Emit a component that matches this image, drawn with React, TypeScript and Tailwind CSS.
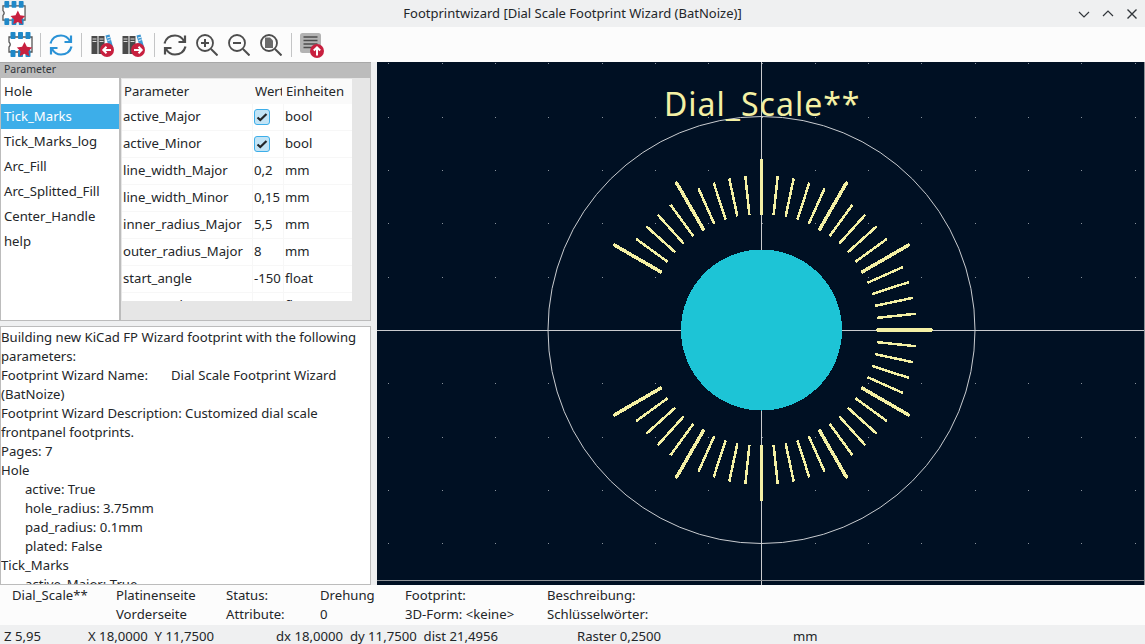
const font = { fontFamily: '"Noto Sans", sans-serif' }

const rows = [
  ['active_Major', 'check', 'bool'],
  ['active_Minor', 'check', 'bool'],
  ['line_width_Major', '0,2', 'mm'],
  ['line_width_Minor', '0,15', 'mm'],
  ['inner_radius_Major', '5,5', 'mm'],
  ['outer_radius_Major', '8', 'mm'],
  ['start_angle', '-150', 'float'],
  ['stop_angle', '150', 'float'],
]

const pages = ['Hole', 'Tick_Marks', 'Tick_Marks_log', 'Arc_Fill', 'Arc_Splitted_Fill', 'Center_Handle', 'help']

const log: [string, boolean][] = [
  ['Footprint Wizard Description: Customized dial scale frontpanel footprints.', false],
  ['Pages: 7', false],
  ['Hole', false],
  ['active: True', true],
  ['hole_radius: 3.75mm', true],
  ['pad_radius: 0.1mm', true],
  ['plated: False', true],
  ['Tick_Marks', false],
  ['active_Major: True', true],
]

function Sep() {
  return <div className="h-6 w-px bg-[#c4c5c6] shrink-0" />
}

function WizardIcon({ size = 25 }: { size?: number }) {
  const pads = [2.500, 10, 17.500]
  return (
    <svg width={size} height={size} viewBox="0 0 25 25" className="shrink-0">
      <path d="M1 5h23v15H1v-5q2.500-2.500 0-5z" fill="#fff" stroke="#555" strokeWidth="1.300" />
      {pads.map((x) => (
        <g key={x}>
          <rect x={x} y="0" width="5" height="7" rx="0.800" fill="#1f88c8" />
          <rect x={x} y="18" width="5" height="7" rx="0.800" fill="#1f88c8" />
        </g>
      ))}
      <path d="M16.500 10l2.400 4.800 5.300.8-3.800 3.600.9 5-4.800-2.400-4.800 2.400.9-5-3.800-3.600 5.300-.8z" fill="#c8203f" />
    </svg>
  )
}

function RefreshIcon({ color }: { color: string }) {
  return (
    <svg width="24" height="24" viewBox="0 0 24 24" fill="none" stroke={color} strokeWidth="2.200" className="shrink-0">
      <path d="M1.500 10.500C3 5 7 2.500 12 2.500c4 0 7 2 9 5.500" />
      <path d="M22 2.500V9h-6.500" />
      <path d="M22.500 13.500C21 19 17 21.500 12 21.500c-4 0-7-2-9-5.500" />
      <path d="M2 21.500V15h6.500" />
    </svg>
  )
}

function LibIcon({ dir }: { dir: 'left' | 'right' }) {
  return (
    <svg width="24" height="24" viewBox="0 0 24 24" className="shrink-0">
      <rect x="0.500" y="3" width="6" height="18" fill="#4a4a4a" />
      <rect x="7.500" y="3" width="6" height="18" fill="#4a4a4a" />
      <path d="M1.500 6h4M1.500 8.500h4M8.500 6h4M8.500 8.500h4" stroke="#ddd" strokeWidth="1" />
      <path d="M14.500 2.500l4-1 4 14-4 1z" fill="#3d97d3" />
      <path d="M16 5l3-.8M16.600 7.500l3-.8" stroke="#fff" strokeWidth="0.900" />
      <circle cx="16" cy="17" r="7" fill="#c8203f" />
      {dir === 'left' ? (
        <path d="M20 17h-7.500M15.500 13.800L12.300 17l3.200 3.200" fill="none" stroke="#fff" strokeWidth="2" />
      ) : (
        <path d="M12 17h7.500M16.500 13.800l3.200 3.200-3.200 3.200" fill="none" stroke="#fff" strokeWidth="2" />
      )}
    </svg>
  )
}

function ZoomIcon({ kind }: { kind: 'in' | 'out' | 'fit' }) {
  return (
    <svg width="22" height="22" viewBox="0 0 22 22" fill="none" stroke="#4d4d4d" strokeWidth="1.800" className="shrink-0">
      <circle cx="9" cy="9" r="8" />
      <path d="M15 15l6.500 6.500" strokeWidth="2" />
      {kind !== 'fit' && <path d="M5 9h8" strokeWidth="2" />}
      {kind === 'in' && <path d="M9 5v8" strokeWidth="2" />}
      {kind === 'fit' && <path d="M5 3.500h5l3 3V14H5z" fill="#6b6b6b" stroke="none" />}
    </svg>
  )
}

function MessageIcon() {
  return (
    <svg width="24" height="26" viewBox="0 0 24 26" className="shrink-0">
      <rect x="0" y="1" width="21" height="20" rx="2.500" fill="#b3b3b3" />
      <path d="M3.500 5h14M3.500 8.500h14M3.500 12h14M3.500 15.500h10" stroke="#4d4d4d" strokeWidth="1.400" />
      <circle cx="17" cy="19" r="7" fill="#c8203f" />
      <path d="M17 23.500V15.500M13.800 18.500L17 15.300l3.200 3.200" fill="none" stroke="#fff" strokeWidth="2" />
    </svg>
  )
}

function DialCanvas() {
  // canvas origin is (377,62), board centre at (761.5,330)
  const cx = 384.5
  const cy = 268
  const dots: [number, number][] = []
  for (let i = -8; i <= 8; i++) {
    for (let j = -6; j <= 6; j++) {
      dots.push([Math.round(cx + i * 53.33), Math.round(cy + j * 53.33)])
    }
  }
  const ticks = []
  for (let a = -60; a <= 240; a += 6) {
    const major = a % 30 === 0
    const rad = (a * Math.PI) / 180
    const r1 = major ? 116.500 : 116
    const r2 = major ? 169.500 : 155
    ticks.push(
      <line
        key={a}
        x1={cx + Math.sin(rad) * r1}
        y1={cy - Math.cos(rad) * r1}
        x2={cx + Math.sin(rad) * r2}
        y2={cy - Math.cos(rad) * r2}
        stroke="#f4f0a4"
        strokeWidth={major ? 3.500 : 2.500}
        strokeLinecap={major ? 'round' : 'butt'}
        shapeRendering="crispEdges"
      />,
    )
  }
  return (
    <svg width="768" height="523" viewBox="0 0 768 523" className="block">
      {dots.map(([x, y]) => (
        <rect key={`${x}-${y}`} x={x} y={y} width="1" height="1" fill="#8a929c" />
      ))}
      <rect x="384" y="0" width="1" height="523" fill="#c9cbce" />
      <rect x="0" y="268" width="768" height="1" fill="#c9cbce" />
      {/* scrollbar tracks along the bottom and right edge */}
      <rect x="0" y="518" width="767" height="1" fill="#8d9196" />
      <rect x="767" y="0" width="1" height="523" fill="#8d9196" />
      <circle cx={cx} cy={cy} r="213.500" fill="none" stroke="#c9ccd0" strokeWidth="1" />
      <circle cx={cx} cy={cy} r="80.500" fill="#1dc4d6" shapeRendering="crispEdges" />
      {ticks}
      <text x="287" y="53.500" fill="#f4f0a4" fontSize="32" letterSpacing="1" style={font}>
        Dial_Scale**
      </text>
    </svg>
  )
}

export default function App() {
  return (
    <div className="w-[1145px] h-[644px] overflow-hidden flex flex-col bg-[#eff0f1] text-[#232629] text-[13.150px] leading-[19px]" style={font}>
      <div className="h-[27px] shrink-0 relative flex items-center justify-center text-[13px]">
        <div className="absolute left-[2px] top-px">
          <WizardIcon size={24} />
        </div>
        <span>Footprintwizard [Dial Scale Footprint Wizard (BatNoize)]</span>
        <div className="absolute right-[6px] top-[7px] flex gap-[10px] text-[#31363b]">
          <svg width="14" height="14" viewBox="0 0 14 14" fill="none" stroke="currentColor" strokeWidth="1.200"><path d="M2 5l5 5 5-5" /></svg>
          <svg width="14" height="14" viewBox="0 0 14 14" fill="none" stroke="currentColor" strokeWidth="1.200"><path d="M2 9l5-5 5 5" /></svg>
          <svg width="14" height="14" viewBox="0 0 14 14" fill="none" stroke="currentColor" strokeWidth="1.400"><path d="M2.500 2.500l9 9M11.500 2.500l-9 9" /></svg>
        </div>
      </div>

      <div className="h-[35px] shrink-0 bg-[#fcfcfc] flex items-center pl-[8px]">
        <WizardIcon />
        <div className="ml-[7px] mr-[8px]"><Sep /></div>
        <RefreshIcon color="#2a92d6" />
        <div className="ml-[8px] mr-[9px]"><Sep /></div>
        <LibIcon dir="left" />
        <div className="w-[7px]" />
        <LibIcon dir="right" />
        <div className="ml-[8px] mr-[8px]"><Sep /></div>
        <RefreshIcon color="#4d4d4d" />
        <div className="w-[9px]" />
        <ZoomIcon kind="in" />
        <div className="w-[10px]" />
        <ZoomIcon kind="out" />
        <div className="w-[10px]" />
        <ZoomIcon kind="fit" />
        <div className="ml-[9px] mr-[8px]"><Sep /></div>
        <MessageIcon />
      </div>

      <div className="h-[523px] shrink-0 flex">
        <div className="w-[371px] shrink-0 flex flex-col">
          <div className="h-[16px] shrink-0 bg-[#bcbcbc] border-t border-[#a8a8a8] pl-[4px] text-[10.500px] leading-[13px] text-[#31363b]">Parameter</div>
          <div className="h-[243px] shrink-0 flex bg-[#e6e6e6] border border-t-0 border-[#bcbcbc]">
            <div className="w-[118px] shrink-0 bg-white py-px">
              {pages.map((p) => (
                <div key={p} className={`h-[25px] pl-[3px] leading-[25px] ${p === 'Tick_Marks' ? 'bg-[#3daee9] text-white' : ''}`}>{p}</div>
              ))}
            </div>
            <div className="w-[2px] bg-[#bcbcbc] shrink-0 mr-px" />
            <div className="w-[230px] h-[222px] overflow-hidden bg-white self-start mt-px">
              <div className="h-[25px] flex bg-[#fafafa] leading-[25px]">
                <div className="w-[131px] pl-[2px]">Parameter</div>
                <div className="w-[31px] pl-[2px]"><div className="w-[27px] overflow-hidden whitespace-nowrap">Wert</div></div>
                <div className="w-[68px] pl-[2px]">Einheiten</div>
              </div>
              {rows.map(([name, value, unit]) => (
                <div key={name} className="h-[27px] flex border-b border-[#f7f7f7] leading-[24px]">
                  <div className="w-[131px] pl-px border-r border-[#f7f7f7] whitespace-nowrap">{name}</div>
                  <div className="w-[31px] pl-[1px] border-r border-[#f7f7f7] whitespace-nowrap flex items-start">
                    {value === 'check' ? (
                      <div className="w-[16px] h-[16px] mt-[5px] rounded-[3px] border border-[#3daee9] bg-[#c2e4f6] flex items-center justify-center">
                        <svg width="12" height="12" viewBox="0 0 12 12" fill="none" stroke="#232629" strokeWidth="2.200"><path d="M1.500 6.500l2.800 2.500L10.500 3" /></svg>
                      </div>
                    ) : (
                      value
                    )}
                  </div>
                  <div className="w-[68px] pl-px">{unit}</div>
                </div>
              ))}
            </div>
          </div>
          <div className="h-[5px] shrink-0" />
          <div className="h-[259px] shrink-0 overflow-hidden bg-white border border-[#bcbcbc] pt-px">
            <div>Building new KiCad FP Wizard footprint with the following parameters:</div>
            <div>
              <span className="inline-block w-[170px]">Footprint Wizard Name:</span>Dial Scale Footprint Wizard (BatNoize)
            </div>
            {log.map(([line, indent]) => (
              <div key={line} className={indent ? 'pl-[24px]' : ''}>{line}</div>
            ))}
          </div>
        </div>
        <div className="w-[6px] shrink-0" />
        <div className="w-[768px] shrink-0 bg-[#001023]">
          <DialCanvas />
        </div>
      </div>

      <div className="h-[40px] shrink-0 bg-[#fcfcfc] flex pt-px">
        <div className="w-[116px] pl-[12px]">Dial_Scale**</div>
        <div className="w-[110px]"><div>Platinenseite</div><div>Vorderseite</div></div>
        <div className="w-[94px]"><div>Status:</div><div>Attribute:</div></div>
        <div className="w-[85px]"><div>Drehung</div><div>0</div></div>
        <div className="w-[142px]"><div>Footprint:</div><div>3D-Form: &lt;keine&gt;</div></div>
        <div><div>Beschreibung:</div><div>Schlüsselwörter:</div></div>
      </div>

      <div className="flex-1 flex whitespace-nowrap leading-[20px] pt-px">
        <div className="w-[88px] pl-[4px]">Z 5,95</div>
        <div className="w-[188px]">X 18,0000&nbsp; Y 11,7500</div>
        <div className="w-[301px]">dx 18,0000&nbsp; dy 11,7500&nbsp; dist 21,4956</div>
        <div className="w-[216px]">Raster 0,2500</div>
        <div>mm</div>
      </div>
    </div>
  )
}
